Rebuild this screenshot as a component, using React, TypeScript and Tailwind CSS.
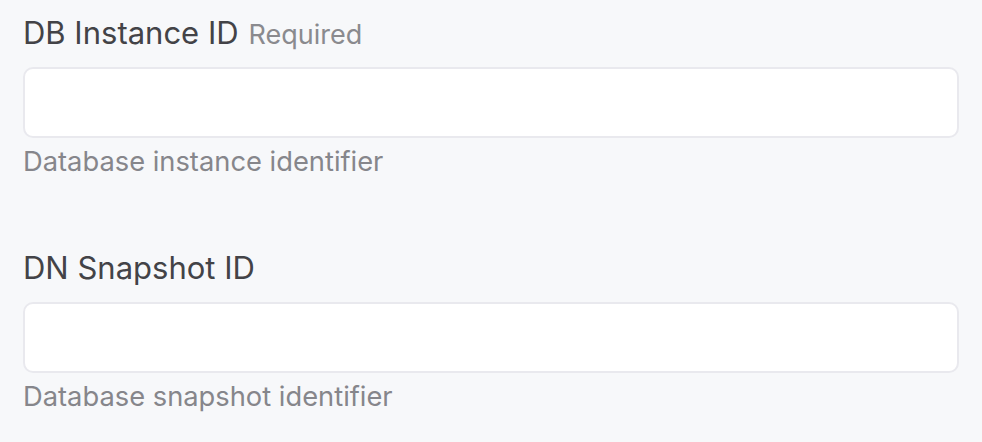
const fields = [
  { label: "DB Instance ID", required: true, help: "Database instance identifier" },
  { label: "DN Snapshot ID", required: false, help: "Database snapshot identifier" },
];

export default function App() {
  return (
    <div className="min-h-[442px] w-full bg-[#f7f8fa] px-[23px] pt-[15px] font-['Inter','Liberation_Sans',sans-serif]">
      {fields.map((f) => (
        <div key={f.label} className="mb-[71px]">
          <label className="flex h-[36px] items-baseline text-[31px] leading-[36px] text-[#434347]">
            {f.label}
            {f.required && (
              <span className="ml-[10px] text-[27px] leading-[36px] text-[#8a8a8e]">Required</span>
            )}
          </label>
          <input
            type="text"
            className="mt-[16px] block h-[71px] w-full rounded-[10px] border-2 border-[#e9e9ee] bg-white px-4 text-[28px] outline-none"
          />
          <p className="mt-[7px] text-[27.3px] leading-[34px] text-[#86868b]">{f.help}</p>
        </div>
      ))}
    </div>
  );
}
